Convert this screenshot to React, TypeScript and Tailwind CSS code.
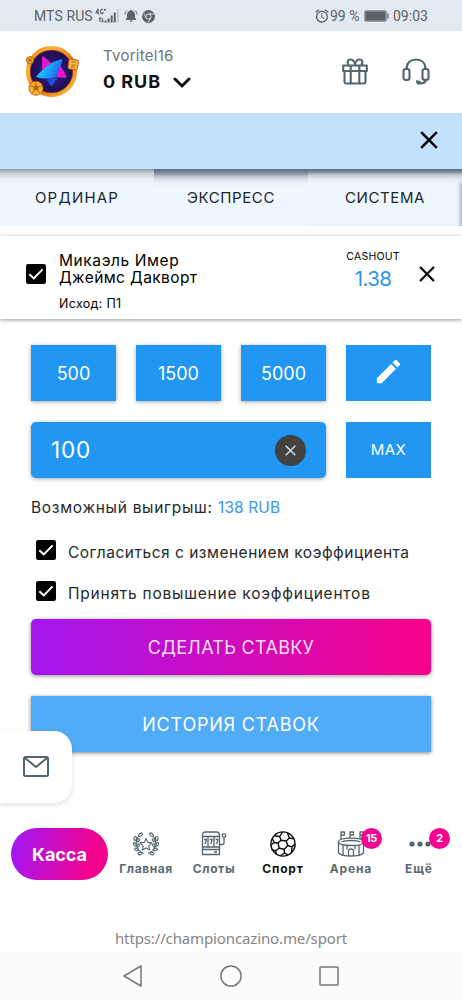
import React from 'react';
import { MdEdit, MdAlarm } from 'react-icons/md';

function Cross({ className }: { className: string }) {
  return (
    <svg viewBox="0 0 18 18" className={className} fill="none" stroke="currentColor" strokeWidth="2.5">
      <path d="M1.200 1.200 16.800 16.800M16.800 1.200 1.200 16.800" />
    </svg>
  );
}

function Check() {
  return (
    <svg viewBox="0 0 20 20" className="h-5 w-5 shrink-0">
      <rect width="20" height="20" rx="2.200" fill="#000" />
      <path d="M3.300 10.200 7.800 14.400 16.600 5.400" fill="none" stroke="#fff" strokeWidth="2" />
    </svg>
  );
}

function StatusBar() {
  return (
    <div className="flex h-[31px] shrink-0 items-center bg-[#e1e9f1] pl-[34px] pr-[33px] pt-px font-['Roboto',sans-serif] text-[14px] text-[#5c6268]">
      <span className="w-[61px] whitespace-nowrap tracking-[0.1px]">MTS RUS</span>
      <svg viewBox="0 0 24 16" className="h-4 w-6" fill="#5c6268">
        <path d="M9.500 12.500h2v2h-2zM12.500 10.500h2v4h-2zM15.700 7.500h2v7h-2zM18.800 4.500h2v10h-2z" />
        <path d="M22.300 1h1.200v13.500h-1.200z" opacity=".35" />
        <path d="M3 .8 1 4.700h3.200M3.200 1v5.400M8 1.800Q5.600.2 5.600 3.600T8 5.400V3.700M9 1.700h2M10 .7v2M5 14V9.800l-1.300 1.400M7.300 9.800V14l1.300-1.300" fill="none" stroke="#5c6268" strokeWidth="1.100" />
      </svg>
      <svg viewBox="0 0 14 14" className="ml-[5px] h-3.5 w-3.5" fill="#5c6268">
        <path d="M7 .8a1 1 0 0 1 1 1c2 .5 3 2 3 4v2.800l1.100 1.600v.8H1.900v-.8L3 8.600V5.800c0-2 1-3.500 3-4a1 1 0 0 1 1-1ZM5.600 11.600h2.800a1.400 1.400 0 0 1-2.800 0Z" />
        <path d="M1 5.500c0-1.700.7-3 1.900-4M13 5.500c0-1.700-.7-3-1.900-4" fill="none" stroke="#5c6268" />
      </svg>
      <svg viewBox="0 0 12 12" className="ml-1 h-[13px] w-[13px]">
        <circle cx="6" cy="6" r="6" fill="#5c6268" />
        <circle cx="6" cy="6" r="2.400" fill="none" stroke="#e1e9f1" strokeWidth=".9" />
        <path d="M6 3.600h5M3.900 7.200 1.500 3M8.100 7.200 5.700 11.500" stroke="#e1e9f1" strokeWidth=".8" />
      </svg>
      <MdAlarm className="ml-auto h-4 w-4" />
      <span className="w-[31px] whitespace-nowrap">99 %</span>
      <svg viewBox="0 0 25 12" className="ml-[3px] h-3 w-[25px]">
        <rect x=".75" y=".75" width="21.500" height="10.500" rx="1.300" fill="#5c6268" stroke="#9ba1a7" strokeWidth="1.500" />
        <path d="M24 3.500v5" stroke="#5c6268" strokeWidth="1.200" />
      </svg>
      <span className="ml-1 w-[36px] whitespace-nowrap">09:03</span>
    </div>
  );
}

function Avatar() {
  return (
    <svg viewBox="0 0 54 54" className="h-[54px] w-[54px] shrink-0">
      <defs>
        <linearGradient id="ring" x1="0" y1="0" x2="1" y2="1">
          <stop offset="0" stopColor="#ee7a14" />
          <stop offset=".25" stopColor="#f9b13a" />
          <stop offset=".6" stopColor="#e8741c" />
          <stop offset="1" stopColor="#ffc53a" />
        </linearGradient>
        <linearGradient id="star" x1="0" y1=".3" x2="1" y2=".7">
          <stop offset="0" stopColor="#15dff5" />
          <stop offset=".5" stopColor="#19a4f5" />
          <stop offset="1" stopColor="#2156ee" />
        </linearGradient>
        <radialGradient id="core">
          <stop offset="0" stopColor="#3b1a8a" />
          <stop offset="1" stopColor="#170d4b" />
        </radialGradient>
      </defs>
      <circle cx="26.500" cy="26.500" r="23.500" fill="url(#core)" stroke="url(#ring)" strokeWidth="4.200" />
      <circle cx="26.500" cy="26.500" r="21.200" fill="none" stroke="#b83c10" strokeWidth="1" opacity=".7" />
      <path d="M17 11.700q.8-1.200 2.200.2l8 7.200-10 9.800Z" fill="#e416c9" />
      <path d="M35 20l6 10q1.600 3-1.500 2.800L31 32Z" fill="#e416c9" />
      <path d="M21.500 34.500 33 32l-5 8q-1.300 1.700-2.500.2Z" fill="#1b4fdb" />
      <path d="M12 30.500Q23 18 35.500 14.300q2.500-.5 1.800 1.800Q35 23.500 30.800 32q-7 3-18 .4-2.200-.7-.8-1.900Z" fill="url(#star)" />
      <circle cx="5" cy="15.200" r="3.700" fill="#f8a725" stroke="#a44808" strokeWidth=".7" />
      <path d="m3 14 4 2.500m-.5-3.500-3 4" stroke="#8b3b0b" strokeWidth=".8" />
      <rect x="43.500" y="14.500" width="9.500" height="10" rx="2" transform="rotate(9 48.500 19)" fill="#f9b845" stroke="#b2601b" />
      <path d="M46.500 17h4.500m-4.800 3h4.500m-4.700 2h4" stroke="#b05b0d" strokeWidth=".9" />
      <circle cx="11" cy="43.200" r="7" fill="#fbb22d" stroke="#b75a0c" strokeWidth=".9" />
      <path d="m11 39.500 3 2.200-1 3.600H9l-1-3.600Z" fill="#8f4108" fillOpacity=".65" />
      <path d="M11 39.500v-2.800m3 5 3-.8m-4 4.400 1.500 3m-5.500-3-2 3m1-6.600-3-1" stroke="#9d4a08" strokeWidth=".7" />
    </svg>
  );
}

function Header() {
  return (
    <header className="flex h-[82px] shrink-0 items-start bg-white pl-[25px] pr-8">
      <div className="mt-[14px]"><Avatar /></div>
      <div className="ml-6 mt-[15px]">
        <div className="h-5 text-[15px] leading-5 tracking-[0.27px] text-[#68757c]">Tvoritel16</div>
        <div className="mt-[6px] flex h-5 items-center">
          <span className="w-[70px] whitespace-nowrap text-[18px] font-bold leading-5 tracking-[0.95px] text-[#111]">0 RUB</span>
          <svg viewBox="0 0 18 11" className="h-[11px] w-[18px]" fill="none" stroke="#111" strokeWidth="3" strokeLinecap="round" strokeLinejoin="round">
            <path d="m2 2 7 7 7-7" />
          </svg>
        </div>
      </div>
      <svg viewBox="0 0 26 27" className="ml-auto mt-[27px] h-[27px] w-[26px]" fill="none" stroke="#53656e" strokeWidth="2.100" strokeLinejoin="round" strokeLinecap="round">
        <path d="M1.200 7.500h23.600v5.500H1.200ZM2.500 13v10.500q0 2 2 2h17q2 0 2-2V13M8.700 7.500v18M17.300 7.500v18M6.500 7Q4 1.500 8.500 1.500 12 1.500 13 6.500 14 1.500 17.500 1.500 22 1.500 19.500 7" />
      </svg>
      <svg viewBox="0 0 28 28" className="ml-[34px] mt-[27px] h-7 w-7" fill="none" stroke="#53656e" strokeWidth="2.100" strokeLinecap="round" strokeLinejoin="round">
        <path d="M4.500 11C4.500 5 8.500 1.500 14 1.500S23.500 5 23.500 11M24 21.500c-.5 3-2.500 4-5.500 4" />
        <rect x="1.500" y="11" width="6" height="11" rx="2.200" />
        <rect x="20.500" y="11" width="6" height="11" rx="2.200" />
        <path d="M14.500 23q3-.3 4.500 1-1 2.300-2.500 2.300-2 0-2-3.300Z" fill="#53656e" strokeWidth="1" />
      </svg>
    </header>
  );
}

function Tabs() {
  return (
    <div className="flex h-[57px] shrink-0 bg-[#eff7fe] text-[15px] text-[#22262a] shadow-[inset_-5px_0_5px_-4px_#8e99a6]">
      <div className="flex w-[154px] items-center justify-center bg-[linear-gradient(#8f989f_0px,#c5cdd5_4px,#e4ecf3_9px,#eff7fe_15px)] pt-px tracking-[1.2px]">ОРДИНАР</div>
      <div className="flex w-[154px] items-center justify-center bg-[linear-gradient(#606d80_0px,#7f8a98_4px,#c3ccd6_8px,#e7eff7_13px,#eff7fe_18px)] pt-px tracking-[0.6px]">ЭКСПРЕСС</div>
      <div className="flex w-[154px] items-center justify-center bg-[linear-gradient(#606d80_0px,#7f8a98_3px,#c3ccd6_6px,#e7eff7_11px,#eff7fe00_16px)] pt-px tracking-[0.6px]">СИСТЕМА</div>
    </div>
  );
}

function BetCard() {
  return (
    <section className="mt-[10px] flex h-[83px] shrink-0 items-start bg-white pl-[26px] pr-[27px] text-black shadow-[0_1px_4px_rgba(0,0,0,0.4)]">
      <div className="mt-7"><Check /></div>
      <div className="ml-[13px] mt-4 w-[180px] whitespace-nowrap">
        <div className="text-[15.5px] leading-[17px] tracking-[0.6px]">Микаэль Имер</div>
        <div className="text-[15.5px] leading-[17px] tracking-[0.4px]">Джеймс Дакворт</div>
        <div className="mt-[10px] text-[12.5px] leading-4 tracking-[0.3px]">Исход: П1</div>
      </div>
      <div className="ml-auto mt-[14px] flex w-[54px] flex-col items-center">
        <div className="text-[10.5px] leading-[14px] tracking-[0.2px]">CASHOUT</div>
        <div className="mt-[3px] text-[20.5px] leading-6 tracking-[-0.6px] text-[#3293e6]">1.38</div>
      </div>
      <Cross className="ml-[19px] mt-[30px] h-4 w-4" />
    </section>
  );
}

const chip = "flex h-14 w-[85px] items-center justify-center bg-[#2196f3] text-[18px] text-white shadow-[0_1px_4px_rgba(0,0,0,0.35)]";

function BetForm() {
  return (
    <main className="flex shrink-0 flex-col px-[31px] pt-[26px]">
      <div className="flex justify-between">
        <button className={chip}>500</button>
        <button className={chip}>1500</button>
        <button className={chip}>5000</button>
        <button className="flex h-14 w-[85px] items-center justify-center bg-[#2196f3] pb-1 text-white"><MdEdit className="h-[31px] w-[31px]" /></button>
      </div>
      <div className="mt-[21px] flex justify-between">
        <div className="flex h-14 w-[295px] items-center justify-between rounded-[5px] bg-[#2196f3] pl-5 pr-5 text-white shadow-[0_1px_4px_rgba(0,0,0,0.35)]">
          <span className="text-[22.5px] tracking-[0.8px]">100</span>
          <span className="flex h-[31px] w-[31px] items-center justify-center rounded-full bg-[#424242] text-[#d8d8d8]"><Cross className="h-[11px] w-[11px]" /></span>
        </div>
        <button className="flex h-14 w-[85px] items-center justify-center bg-[#2196f3] text-[15px] tracking-[0.4px] text-white">MAX</button>
      </div>
      <div className="mt-5 flex h-5 items-center whitespace-nowrap text-[15.5px] leading-5 text-[#26292c]">
        <span className="w-[187px] tracking-[0.7px]">Возможный выигрыш:</span>
        <span className="tracking-[0.1px] text-[#3a98e8]">138 RUB</span>
      </div>
      <label className="mt-[22px] flex h-6 whitespace-nowrap pl-[5px] text-[15.5px] leading-6 text-[#26292c]">
        <Check /><span className="ml-3 mt-px tracking-[0.5px]">Согласиться с изменением коэффициента</span>
      </label>
      <label className="mt-[17px] flex h-6 whitespace-nowrap pl-[5px] text-[15.5px] leading-6 text-[#26292c]">
        <Check /><span className="ml-3 mt-px tracking-[0.77px]">Принять повышение коэффициентов</span>
      </label>
      <button className="mt-[14px] h-14 rounded-[5px] bg-[linear-gradient(90deg,#a516ef_2%,#f4018b_96%)] text-[18px] tracking-[0.3px] text-[#fbdcf8] shadow-[0_1px_4px_rgba(0,0,0,0.45)]">СДЕЛАТЬ СТАВКУ</button>
      <button className="mt-[21px] h-14 bg-[#52abf6] text-[18px] tracking-[0.78px] text-white shadow-[0_1px_4px_rgba(0,0,0,0.5)]">ИСТОРИЯ СТАВОК</button>
    </main>
  );
}

function LaurelIcon() {
  return (
    <svg viewBox="0 0 26 24" className="h-6 w-[26px]" fill="none" stroke="#53656e" strokeWidth="1.100" strokeLinejoin="round">
      <path d="m13 6.500 1.700 3.900 4.200.5-3.100 2.900.8 4.200-3.600-2.100L9.400 18l.8-4.200-3.100-2.900 4.200-.5Z" />
      {['', 'translate(26 0) scale(-1 1)'].map((t) => (
        <g key={t} transform={t}>
          <path d="M5.500 4.500Q2.800 8 3.200 12.500 4.500 19 11 21.500" />
          <ellipse cx="7.500" cy="2.700" rx="2.200" ry="1.200" transform="rotate(-40 7.500 2.700)" />
          <ellipse cx="2.200" cy="6.500" rx="1.200" ry="2" transform="rotate(10 2.200 6.500)" />
          <ellipse cx="5.300" cy="8.200" rx="1.800" ry="1" transform="rotate(-40 5.300 8.200)" />
          <ellipse cx="1.800" cy="12.300" rx="1.100" ry="2" transform="rotate(-25 1.800 12.300)" />
          <ellipse cx="5.200" cy="13.500" rx="1" ry="1.800" transform="rotate(30 5.200 13.500)" />
          <ellipse cx="3.500" cy="17.500" rx="1.200" ry="2" transform="rotate(-60 3.500 17.500)" />
          <ellipse cx="7" cy="21.500" rx="2" ry="1.200" transform="rotate(-20 7 21.500)" />
        </g>
      ))}
    </svg>
  );
}

function SlotIcon() {
  return (
    <svg viewBox="0 0 26 25" className="h-[25px] w-[26px]" fill="none" stroke="#53656e" strokeWidth="1.300" strokeLinejoin="round">
      <path d="M1.500 5.500V4q0-3 3-3h11q3 0 3 3v1.500ZM1.500 5.500h17v18h-17ZM1.500 16h17M1.500 18.500h17M7 5.500V16M13 5.500V16M13 21h3" />
      <path d="M3 8.500h2.400l-1.300 4.600M8.700 8.500h2.500l-1.300 4.600M14.500 8.500H17l-1.300 4.600" />
      <path d="M18.500 13.500h3.200q1.300 0 1.300-1.300V6.500" />
      <circle cx="23" cy="4.600" r="1.800" />
    </svg>
  );
}

function BallIcon() {
  return (
    <svg viewBox="0 0 26 26" className="h-[26px] w-[26px]" fill="none" stroke="#0c0c0c" strokeWidth="1.400" strokeLinejoin="round">
      <circle cx="13" cy="13" r="12.100" />
      <path d="M11 9.200l5.200.8 1.500 4.500-3.500 4-5-1.500-1.200-5ZM11 9.200 9.700 5.500 12.500 1M9.700 5.500 5 5M16.200 10l3.100-3L17.500 2M19.300 7l4.200.8M17.700 14.500l4.300 1.300L25 13M22 15.800l-.5 6M14.200 18.500l.3 3.500 3.500 1.800M14.500 22l-4.300 3M9.200 17l-3.500 2.700.6 3.300M5.700 19.700l-4-1M8 12 4 11.500 1 14M4 11.500 2.500 7.500" />
    </svg>
  );
}

function ArenaIcon() {
  return (
    <svg viewBox="0 0 28 26" className="h-[26px] w-7" fill="none" stroke="#53656e" strokeWidth="1.300" strokeLinejoin="round">
      <path d="M1.500 11c0-2.500 5-3.800 12.500-3.800S26.500 8.500 26.500 11 21 14.500 14 14.500 1.500 13.500 1.500 11Z" />
      <path d="M1.500 11V22q3 3 12.500 3t12.500-3V11M4.500 11q3-1.500 9.500-1.500t9.500 1.500M6 14v10M10 14.500v4M18 14.500v4M22 14v10M11.500 24.800v-4.800q0-2 2.500-2t2.500 2v4.800M4 8V1h3.500v3H4M13 7V1h3.500v3H13M23 8V1h3.500v3H23" />
    </svg>
  );
}

function NavItem({ label, icon, active, badge, className }: { label: string; icon: React.ReactNode; active?: boolean; badge?: string; className: string }) {
  return (
    <div className={`relative flex flex-col items-center ${className}`}>
      <div className="flex h-[31px] items-center justify-center">{icon}</div>
      <span className={`mt-[2px] whitespace-nowrap text-[12px] font-bold leading-4 ${active ? 'text-[#111]' : 'text-[#5a6a73]'}`}>{label}</span>
      {badge && (
        <span className="absolute right-0 top-0 flex h-[21px] w-[21px] items-center justify-center rounded-full bg-[#f3058f] text-[11px] font-bold tracking-[-0.3px] text-white">{badge}</span>
      )}
    </div>
  );
}

function BottomNav() {
  return (
    <nav className="mt-[76px] flex h-[52px] shrink-0 pl-[11px]">
      <button className="h-[52px] w-[97px] shrink-0 rounded-full bg-[linear-gradient(105deg,#a616ef_8%,#f4018b_82%)] text-[18px] font-bold tracking-[-0.05px] text-white">Касса</button>
      <NavItem className="ml-2 w-[60px] tracking-[0.55px]" label="Главная" icon={<LaurelIcon />} />
      <NavItem className="ml-2 w-[60px] tracking-[0.6px]" label="Слоты" icon={<SlotIcon />} />
      <NavItem className="ml-[9px] w-[60px] tracking-[0.8px]" label="Спорт" active icon={<BallIcon />} />
      <NavItem className="ml-[7px] w-[62px] tracking-[0.85px]" label="Арена" icon={<ArenaIcon />} badge="15" />
      <NavItem
        className="ml-[6px] w-[62px] tracking-[1px]"
        label="Ещё"
        badge="2"
        icon={<svg viewBox="0 0 22 6" className="h-1.5 w-[22px] translate-x-px" fill="#53656e"><circle cx="3" cy="3" r="2.600" /><circle cx="11" cy="3" r="2.600" /><circle cx="19" cy="3" r="2.600" /></svg>}
      />
    </nav>
  );
}

export default function App() {
  return (
    <div className="relative flex h-[1000px] w-[462px] flex-col overflow-hidden bg-white font-['Inter',sans-serif]">
      <StatusBar />
      <Header />
      <div className="flex h-14 shrink-0 items-center justify-end bg-[#c1e1fc] pb-0.5 pr-6 text-black">
        <Cross className="h-[18px] w-[18px]" />
      </div>
      <Tabs />
      <BetCard />
      <BetForm />
      <BottomNav />
      <div className="mt-[46px] flex h-[25px] shrink-0 items-center justify-center font-['Noto_Sans',sans-serif] text-[15px] tracking-[-0.13px] text-[#858585]">https://championcazino.me/sport</div>
      <div className="flex grow items-center justify-center gap-[76px] bg-[#fbfbfb]">
        <svg viewBox="0 0 22 22" className="h-[22px] w-[22px]" fill="none" stroke="#777" strokeWidth="1.500" strokeLinejoin="round"><path d="M19 1v20L2 11Z" /></svg>
        <svg viewBox="0 0 22 22" className="h-[22px] w-[22px]" fill="none" stroke="#777" strokeWidth="1.500"><circle cx="11" cy="11" r="10.100" /></svg>
        <svg viewBox="0 0 22 22" className="h-[22px] w-[22px]" fill="none" stroke="#777" strokeWidth="1.500"><rect x="2" y="2" width="18" height="18" rx=".8" /></svg>
      </div>
      <button className="absolute left-0 top-[731px] flex h-[72px] w-[72px] items-center justify-center rounded-r-[18px] bg-white pb-px shadow-[0_2px_5px_rgba(0,0,0,0.12)]">
        <svg viewBox="0 0 26 21" className="h-[21px] w-[26px]" fill="none" stroke="#53656e" strokeWidth="2" strokeLinejoin="round"><rect x="1" y="1" width="24" height="19" rx="1.500" /><path d="m2 2 11 9L24 2" /></svg>
      </button>
    </div>
  );
}
